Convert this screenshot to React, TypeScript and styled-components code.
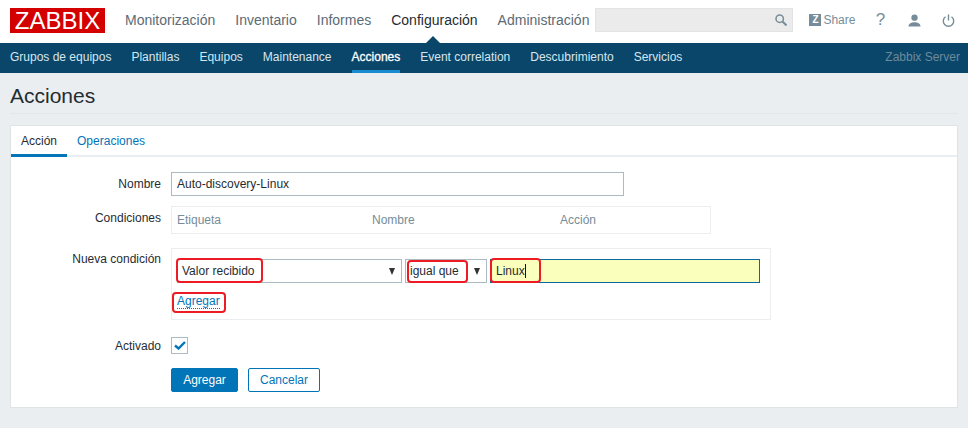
import React from "react";
import styled, { createGlobalStyle } from "styled-components";

const Global = createGlobalStyle`
  html, body { margin: 0; padding: 0; background: #ebeef0; }
  body { font-family: "Liberation Sans", Arial, sans-serif; font-size: 12px; color: #1f2c33; }
  * { box-sizing: border-box; }
`;

const Page = styled.div`
  width: 968px;
  height: 428px;
  overflow: hidden;
  background: #ebeef0;
`;

const TopBar = styled.header`
  height: 43px;
  background: #fff;
  display: flex;
  align-items: center;
  padding: 0 10px;
  & > * { flex-shrink: 0; }
`;

const Logo = styled.div`
  width: 95px;
  height: 25px;
  margin-top: -3px;
  background: #d40000;
  color: #fff;
  font-size: 24px;
  line-height: 25px;
  text-align: center;
`;

const MainMenu = styled.nav`
  display: flex;
  gap: 20px;
  margin-left: 20px;
  margin-top: -3px;
`;

const MainItem = styled.a<{ $active?: boolean }>`
  position: relative;
  font-size: 14px;
  line-height: 16px;
  color: ${(p) => (p.$active ? "#1f2c33" : "#5c6b75")};
`;

const Caret = styled.span`
  position: absolute;
  left: 34px;
  top: 24px;
  width: 0;
  height: 0;
  border-left: 8px solid transparent;
  border-right: 8px solid transparent;
  border-bottom: 8px solid #0a466a;
`;

const SearchBox = styled.div`
  width: 198px;
  height: 24px;
  margin-left: 6px;
  margin-top: -3px;
  background: #ebebeb;
  border: 1px solid #e3e3e3;
  display: flex;
  align-items: center;
  justify-content: flex-end;
  padding-right: 5px;
`;

const Tools = styled.div`
  display: flex;
  align-items: center;
  margin-top: -3px;
  margin-left: 16px;
`;

const ShareLink = styled.span`
  display: flex;
  align-items: center;
  gap: 2px;
  font-size: 12px;
  color: #768d99;
  width: 54px;
`;

const ZBadge = styled.span`
  width: 12px;
  height: 12px;
  background: #768d99;
  color: #fff;
  font-size: 10px;
  font-weight: bold;
  line-height: 12px;
  text-align: center;
`;

const IconSlot = styled.span`
  width: 34px;
  height: 20px;
  display: flex;
  align-items: center;
  justify-content: center;
  color: #768d99;
  font-size: 17px;
  line-height: 20px;
`;

const SubBar = styled.nav`
  height: 30px;
  background: #0a466a;
  display: flex;
  align-items: stretch;
  padding: 0 8px 0 10px;
  gap: 20px;
`;

const SubItem = styled.a<{ $active?: boolean }>`
  font-size: 12px;
  line-height: 28px;
  height: 30px;
  color: ${(p) => (p.$active ? "#fff" : "#d7e6ee")};
  font-weight: 400;
  -webkit-text-stroke: ${(p) => (p.$active ? "0.3px #fff" : "0")};
  border-bottom: 3px solid ${(p) => (p.$active ? "#1b8ccf" : "transparent")};
`;

const ServerName = styled.span`
  margin-left: auto;
  font-size: 12px;
  line-height: 28px;
  color: #6d8a9a;
`;

const Title = styled.h1`
  margin: 0 10px;
  height: 41px;
  border-bottom: 1px solid #e3e6e8;
  font-size: 21px;
  line-height: 46px;
  font-weight: 400;
  color: #1f2c33;
`;

const Card = styled.section`
  margin: 11px 10px 0;
  height: 283px;
  background: #fff;
  border: 1px solid #dfe4e7;
`;

const Tabs = styled.div`
  height: 31px;
  display: flex;
  border-bottom: 2px solid #ebeef0;
`;

const Tab = styled.a<{ $active?: boolean }>`
  padding: 0 10px;
  height: 31px;
  line-height: 31px;
  font-size: 12px;
  color: ${(p) => (p.$active ? "#1f2c33" : "#0275b8")};
  border-bottom: 3px solid ${(p) => (p.$active ? "#0275b8" : "transparent")};
`;

const Form = styled.div`
  display: grid;
  grid-template-columns: 150px 1fr;
  column-gap: 10px;
  align-items: start;
  padding-top: 15px;
  grid-auto-rows: min-content;
`;

const Label = styled.label<{ $top: number }>`
  text-align: right;
  padding-top: ${(p) => p.$top}px;
  color: #1f2c33;
  line-height: 14px;
`;

const NameInput = styled.div`
  width: 453px;
  height: 24px;
  border: 1px solid #acbbc2;
  padding: 0 4px 0 5px;
  line-height: 22px;
  margin-bottom: 10px;
`;

const ConditionsTable = styled.div`
  width: 540px;
  height: 28px;
  border: 1px solid #ebeef0;
  display: grid;
  grid-template-columns: 195px 188px 1fr;
  padding-left: 5px;
  line-height: 26px;
  color: #768d99;
  margin-bottom: 14px;
`;

const NewCondition = styled.div`
  position: relative;
  width: 600px;
  height: 72px;
  border: 1px solid #ebeef0;
  padding: 10px 10px 0 5px;
  margin-bottom: 17px;
`;

const ConditionRow = styled.div`
  display: flex;
  gap: 3px;
`;

const SelectBox = styled.div<{ $w: number; $pad: number }>`
  width: ${(p) => p.$w}px;
  height: 24px;
  border: 1px solid #acbbc2;
  padding: 0 4px 0 ${(p) => p.$pad}px;
  line-height: 22px;
  display: flex;
  justify-content: space-between;
  align-items: center;
`;

const Arrow = styled.span`
  width: 0;
  height: 0;
  margin-right: 2px;
  border-left: 3.5px solid transparent;
  border-right: 3.5px solid transparent;
  border-top: 7px solid #333;
`;

const ValueInput = styled.div`
  width: 270px;
  height: 24px;
  background: #fbffbc;
  border: 1px solid #0a6aa0;
  padding: 0 5px;
  line-height: 22px;
  display: flex;
  align-items: center;
`;

const TextCursor = styled.span`
  display: inline-block;
  width: 1px;
  height: 14px;
  background: #111;
`;

const AddLink = styled.a`
  display: inline-block;
  margin-top: 11px;
  color: #0275b8;
  line-height: 14px;
  border-bottom: 1px dotted #0275b8;
`;

const Mark = styled.span<{ $x: number; $y: number; $w: number; $h: number }>`
  position: absolute;
  left: ${(p) => p.$x}px;
  top: ${(p) => p.$y}px;
  width: ${(p) => p.$w}px;
  height: ${(p) => p.$h}px;
  border: 2px solid #ed1c24;
  border-radius: 4px;
  pointer-events: none;
`;

const CheckBox = styled.div`
  width: 17px;
  height: 17px;
  border: 1px solid #acbbc2;
  display: flex;
  align-items: center;
  justify-content: center;
  margin-bottom: 14px;
`;

const Buttons = styled.div`
  display: flex;
  gap: 10px;
`;

const Primary = styled.button`
  width: 67px;
  height: 24px;
  border: 1px solid #0275b8;
  border-radius: 2px;
  background: #0275b8;
  color: #fff;
  font: 12px "Liberation Sans", Arial, sans-serif;
  padding: 0;
`;

const Secondary = styled(Primary)`
  width: 72px;
  background: #fff;
  color: #0275b8;
`;

export default function App() {
  return (
    <Page>
      <Global />
      <TopBar>
        <Logo>ZABBIX</Logo>
        <MainMenu>
          <MainItem>Monitorización</MainItem>
          <MainItem>Inventario</MainItem>
          <MainItem>Informes</MainItem>
          <MainItem $active>
            Configuración
            <Caret />
          </MainItem>
          <MainItem>Administración</MainItem>
        </MainMenu>
        <SearchBox>
          <svg width="12" height="12" viewBox="0 0 12 12" fill="none" stroke="#768d99" strokeWidth="1.5">
            <circle cx="4.7" cy="4.7" r="3.7" />
            <path d="M7.5 7.5 L11.5 11.5" strokeWidth="2" />
          </svg>
        </SearchBox>
        <Tools>
          <ShareLink>
            <ZBadge>Z</ZBadge>Share
          </ShareLink>
          <IconSlot>?</IconSlot>
          <IconSlot>
            <svg width="13" height="13" viewBox="0 0 14 14" fill="#768d99">
              <circle cx="7" cy="4" r="3.4" />
              <path d="M0.5 13.5 C0.5 9.8 4 8.8 7 8.8 C10 8.8 13.5 9.8 13.5 13.5 Z" />
            </svg>
          </IconSlot>
          <IconSlot>
            <svg width="13" height="13" viewBox="0 0 14 14" fill="none" stroke="#768d99" strokeWidth="1.5">
              <path d="M3.8 3 A5.6 5.6 0 1 0 10.2 3" />
              <path d="M7 0.5 V7" />
            </svg>
          </IconSlot>
        </Tools>
      </TopBar>
      <SubBar>
        <SubItem>Grupos de equipos</SubItem>
        <SubItem>Plantillas</SubItem>
        <SubItem>Equipos</SubItem>
        <SubItem>Maintenance</SubItem>
        <SubItem $active>Acciones</SubItem>
        <SubItem>Event correlation</SubItem>
        <SubItem>Descubrimiento</SubItem>
        <SubItem>Servicios</SubItem>
        <ServerName>Zabbix Server</ServerName>
      </SubBar>
      <Title>Acciones</Title>
      <Card>
        <Tabs>
          <Tab $active>Acción</Tab>
          <Tab>Operaciones</Tab>
        </Tabs>
        <Form>
          <Label $top={5}>Nombre</Label>
          <NameInput>Auto-discovery-Linux</NameInput>
          <Label $top={5}>Condiciones</Label>
          <ConditionsTable>
            <span>Etiqueta</span>
            <span>Nombre</span>
            <span>Acción</span>
          </ConditionsTable>
          <Label $top={4}>Nueva condición</Label>
          <NewCondition>
            <ConditionRow>
              <SelectBox $w={225} $pad={4}>
                Valor recibido
                <Arrow />
              </SelectBox>
              <SelectBox $w={82} $pad={4}>
                igual que
                <Arrow />
              </SelectBox>
              <ValueInput>
                Linux
                <TextCursor />
              </ValueInput>
            </ConditionRow>
            <AddLink>Agregar</AddLink>
            <Mark $x={4} $y={9} $w={87} $h={25} />
            <Mark $x={235} $y={11} $w={61} $h={23} />
            <Mark $x={318} $y={9} $w={51} $h={25} />
            <Mark $x={0} $y={43} $w={54} $h={21} />
          </NewCondition>
          <Label $top={2}>Activado</Label>
          <CheckBox>
            <svg width="12" height="9" viewBox="0 0 12 9" fill="none" stroke="#0275b8" strokeWidth="2.4">
              <path d="M1 4.5 L4.5 7.5 L11 1" />
            </svg>
          </CheckBox>
          <span />
          <Buttons>
            <Primary>Agregar</Primary>
            <Secondary>Cancelar</Secondary>
          </Buttons>
        </Form>
      </Card>
    </Page>
  );
}
